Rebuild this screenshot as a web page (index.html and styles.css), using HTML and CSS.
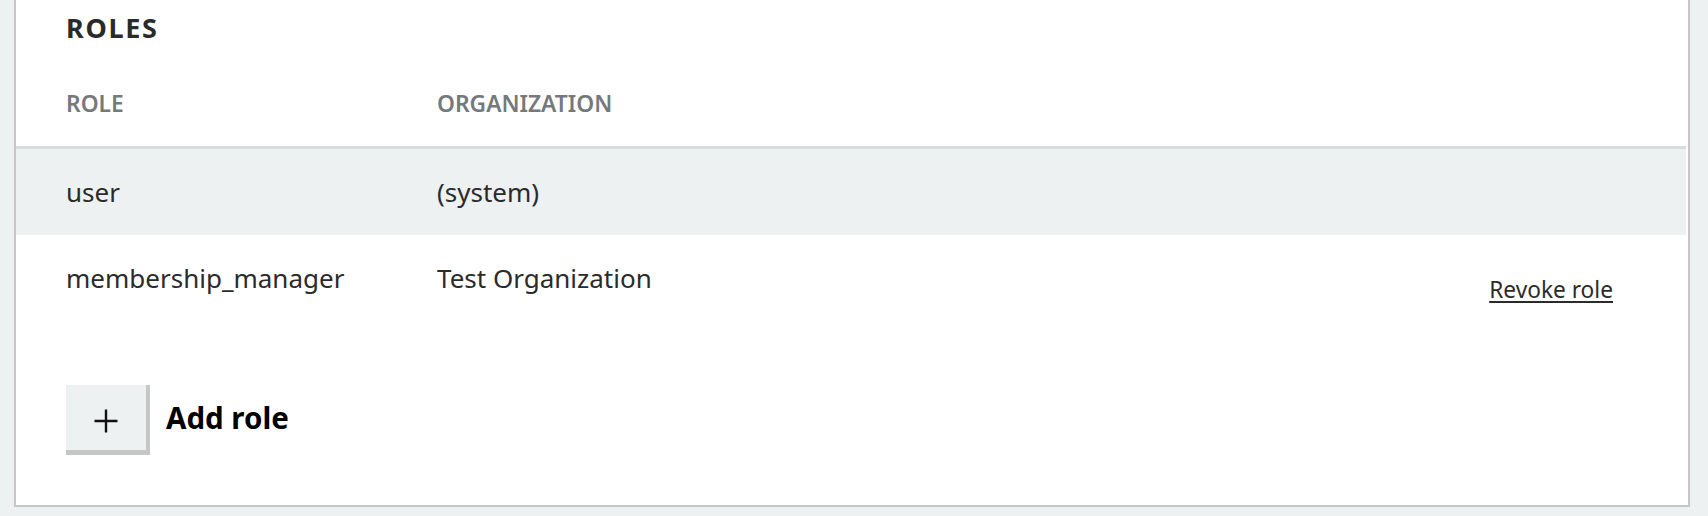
FILE: index.html
```html
<!DOCTYPE html>
<html lang="en">
<head>
<meta charset="utf-8">
<title>Roles</title>
<link rel="stylesheet" href="styles.css">
</head>
<body>
<div class="page">
  <section class="card">
    <h2 class="card-title">ROLES</h2>
    <div class="roles-table">
      <div class="row row-head">
        <div class="cell">ROLE</div>
        <div class="cell">ORGANIZATION</div>
        <div class="cell"></div>
      </div>
      <div class="row row-shaded">
        <div class="cell">user</div>
        <div class="cell">(system)</div>
        <div class="cell"></div>
      </div>
      <div class="row">
        <div class="cell">membership_manager</div>
        <div class="cell">Test Organization</div>
        <div class="cell cell-action"><a class="revoke" href="#">Revoke role</a></div>
      </div>
    </div>
    <div class="add-role">
      <button class="add-btn" type="button" aria-label="Add role">
        <svg class="plus" width="24" height="24" viewBox="0 0 24 24" aria-hidden="true">
          <path d="M12 0.5V23.5M0.5 12H23.5" stroke="#111" stroke-width="2.4" fill="none"/>
        </svg>
      </button>
      <span class="add-label">Add role</span>
    </div>
  </section>
</div>
</body>
</html>
```
FILE: styles.css
```css
html, body {
  margin: 0;
  padding: 0;
  background: #eef1f2;
}

body {
  font-family: "Noto Sans", "Open Sans", sans-serif;
  color: #2b2b2b;
}

.page {
  padding: 0 18px 10px 14px;
}

.card {
  background: #ffffff;
  border: 2px solid #c6c6c6;
  border-top: none;
  padding-top: 10px;
}

.card-title {
  margin: 0 0 0 50px;
  font-size: 27px;
  line-height: 36px;
  font-weight: 700;
  letter-spacing: 1.7px;
  color: #2a2a2a;
}

.roles-table {
  margin: 42px 2px 0 0;
}

.row {
  display: grid;
  grid-template-columns: 371px 1fr auto;
  padding: 24px 73px 24px 50px;
  font-size: 26px;
  line-height: 38px;
  align-items: start;
}

.row-head {
  padding-top: 1px;
  padding-bottom: 27px;
  border-bottom: 3px solid #d9dadb;
  font-size: 22.8px;
  line-height: 30px;
  font-weight: 600;
  color: #75797b;
}

.row-shaded {
  background: #edf1f2;
}

.cell-action {
  padding-top: 10px;
}

.revoke {
  font-size: 22.7px;
  color: #2b2b2b;
  text-decoration: underline;
  text-decoration-thickness: 2px;
  text-underline-offset: 3px;
}

.add-role {
  display: flex;
  align-items: flex-start;
  gap: 16px;
  padding: 52px 0 50px 50px;
}

.add-btn {
  box-sizing: border-box;
  width: 84px;
  height: 70px;
  margin: 0;
  padding: 7px 0 0 0;
  background: #edf1f2;
  border: none;
  border-right: 4px solid #c6c6c6;
  border-bottom: 5px solid #c6c6c6;
  display: flex;
  align-items: center;
  justify-content: center;
}

.plus {
  display: block;
}

.add-label {
  margin-top: 13px;
  font-size: 29.5px;
  line-height: 40px;
  font-weight: 700;
  color: #000000;
}
```
